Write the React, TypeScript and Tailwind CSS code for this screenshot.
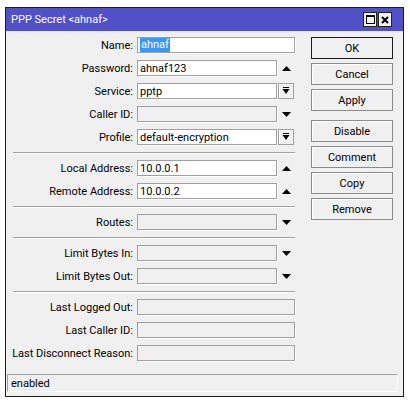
type Tail = 'none' | 'up' | 'down' | 'combo';

function Arrow({ dir }: { dir: 'up' | 'down' }) {
  return (
    <svg width="9" height="5" viewBox="0 0 9 5" className="block">
      {dir === 'up' ? <path d="M0 5 L4.5 0 L9 5 Z" fill="#000" /> : <path d="M0 0 L9 0 L4.5 5 Z" fill="#000" />}
    </svg>
  );
}

function Row({
  label,
  value = '',
  tail = 'none',
  disabled = false,
  selected = false,
}: {
  label: string;
  value?: string;
  tail?: Tail;
  disabled?: boolean;
  selected?: boolean;
}) {
  return (
    <div className="flex items-center h-[16px]">
      <div className="w-[120px] mr-[4px] flex justify-end whitespace-nowrap">{label}</div>
      <div className="w-[158px] flex h-full">
        <div
          className={`flex-1 h-full border border-[#a0a0a0] shadow-[1px_1px_0_#fff] flex items-center pl-[2px] overflow-hidden whitespace-nowrap ${
            disabled ? 'bg-[#f0f0f0]' : 'bg-white'
          }`}
        >
          {selected ? <span className="bg-[#3399ff] text-white leading-[14px] px-[1px]">{value}</span> : value}
        </div>
        {tail === 'up' && (
          <div className="w-[18px] flex items-center justify-center">
            <Arrow dir="up" />
          </div>
        )}
        {tail === 'down' && (
          <div className="w-[18px] flex items-center justify-center">
            <Arrow dir="down" />
          </div>
        )}
        {tail === 'combo' && (
          <div className="w-[18px] pl-[1px] h-full">
            <div className="w-[16px] h-full border border-[#a0a0a0] bg-[#f0f0f0] shadow-[inset_1px_1px_0_#fff] flex items-center justify-center">
              <svg width="8" height="8" viewBox="0 0 8 8" className="block">
                <rect x="1" y="0" width="6" height="1" fill="#000" />
                <path d="M0.5 2 L7.5 2 L4 7 Z" fill="#000" />
              </svg>
            </div>
          </div>
        )}
      </div>
    </div>
  );
}

function Sep() {
  return <div className="w-[282px] h-[2px] border-t border-[#a0a0a0] border-b border-b-white my-[6px] mt-[7px]" />;
}

function Btn({ children, primary = false, extra = '' }: { children: string; primary?: boolean; extra?: string }) {
  return (
    <div
      className={`h-[22px] w-[82px] flex items-center justify-center bg-[#f0f0f0] border ${
        primary ? 'border-[#1a1a1a]' : 'border-[#8c8c8c] shadow-[inset_1px_1px_0_#fff]'
      } ${extra}`}
    >
      {children}
    </div>
  );
}

export default function App() {
  return (
    <div
      className="w-[410px] h-[406px] bg-white pt-[7px] pl-[5px] text-[11px] text-black leading-none"
      style={{ fontFamily: 'Roboto, "Liberation Sans", Arial, sans-serif' }}
    >
      <div className="w-[399px] h-[390px] border border-[#1e1e1e] bg-[#f0f0f0] flex flex-col">
        {/* title bar */}
        <div className="h-[23px] bg-[#5151c7] flex items-center pl-[5px] pr-[11px] text-white text-[11px]">
          <span>PPP Secret &lt;ahnaf&gt;</span>
          <div className="ml-auto flex gap-[1px]">
            <div className="w-[14px] h-[15px] bg-[#f0f0f0] border border-[#222] flex items-center justify-center">
              <div className="w-[9px] h-[9px] border border-black border-t-2" />
            </div>
            <div className="w-[14px] h-[15px] bg-[#f0f0f0] border border-[#222] flex items-center justify-center">
              <svg width="8" height="8" viewBox="0 0 8 8" className="block">
                <path d="M1 1 L7 7 M7 1 L1 7" stroke="#000" strokeWidth="2" />
              </svg>
            </div>
          </div>
        </div>

        {/* body */}
        <div className="flex-1 flex pt-[6px]">
          <div className="pl-[7px] flex flex-col">
            <div className="flex flex-col gap-[7px]">
              <Row label="Name:" value="ahnaf" selected />
              <Row label="Password:" value="ahnaf123" tail="up" />
              <Row label="Service:" value="pptp" tail="combo" />
              <Row label="Caller ID:" tail="down" disabled />
              <Row label="Profile:" value="default-encryption" tail="combo" />
            </div>
            <Sep />
            <div className="flex flex-col gap-[7px]">
              <Row label="Local Address:" value="10.0.0.1" tail="up" />
              <Row label="Remote Address:" value="10.0.0.2" tail="up" />
            </div>
            <Sep />
            <Row label="Routes:" tail="down" disabled />
            <Sep />
            <div className="flex flex-col gap-[7px]">
              <Row label="Limit Bytes In:" tail="down" disabled />
              <Row label="Limit Bytes Out:" tail="down" disabled />
            </div>
            <Sep />
            <div className="flex flex-col gap-[7px]">
              <Row label="Last Logged Out:" disabled />
              <Row label="Last Caller ID:" disabled />
              <Row label="Last Disconnect Reason:" disabled />
            </div>
          </div>
          <div className="ml-[16px] flex flex-col gap-[4px]">
            <Btn primary>OK</Btn>
            <Btn>Cancel</Btn>
            <Btn>Apply</Btn>
            <Btn extra="mt-[5px]">Disable</Btn>
            <Btn>Comment</Btn>
            <Btn>Copy</Btn>
            <Btn>Remove</Btn>
          </div>
        </div>

        {/* status bar */}
        <div className="h-[18px] ml-[1px] mr-[5px] mb-[4px] border-t border-l border-[#a0a0a0] border-b border-r border-b-white border-r-white flex items-center pl-[3px]">
          enabled
        </div>
      </div>
    </div>
  );
}
